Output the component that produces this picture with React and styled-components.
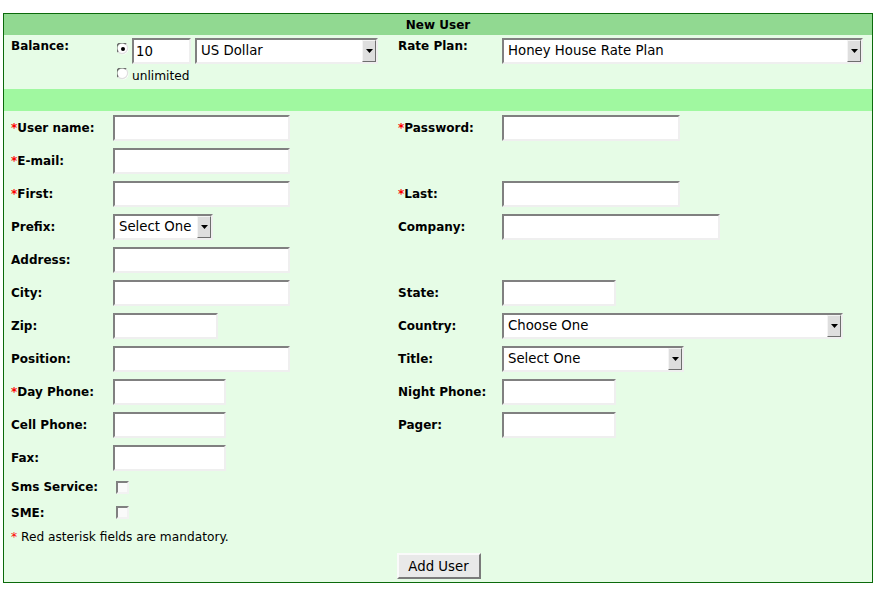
import React from 'react';
import styled, { createGlobalStyle } from 'styled-components';

const GlobalStyle = createGlobalStyle`
  body {
    margin: 0;
    background: #fff;
    font-family: "DejaVu Sans", "Liberation Sans", sans-serif;
    color: #000;
  }
`;

const Page = styled.div`
  padding: 13px 0 0 3px;
`;

const Panel = styled.div`
  width: 870px;
  box-sizing: border-box;
  border: 1px solid #0b6a0b;
  background: #e6fce6;
`;

const Header = styled.div`
  height: 21px;
  line-height: 22px;
  background: #91d991;
  text-align: center;
  font-size: 12px;
  font-weight: bold;
`;

const Band = styled.div`
  height: 22px;
  background: #a0f8a0;
`;

const Row = styled.div`
  display: grid;
  grid-template-columns: 102px 285px 104px 1fr;
  align-items: ${(p) => (p.$top ? 'start' : 'center')};
  height: ${(p) => p.$h || 33}px;
  padding: ${(p) => (p.$top ? '3px' : '0')} 8px 0 7px;
  box-sizing: border-box;
`;

const Label = styled.div`
  font-size: 12px;
  font-weight: bold;
  line-height: 14px;
  white-space: nowrap;
  padding-top: ${(p) => (p.$pad ? '1px' : '0')};
`;

const Star = styled.span`
  color: #ff0000;
`;

const TextInput = styled.input`
  display: block;
  width: ${(p) => p.$w}px;
  height: 26px;
  box-sizing: border-box;
  border: 2px solid;
  border-color: #808080 #efefef #efefef #808080;
  background: #fff;
  padding: 0 2px;
  font-family: "DejaVu Sans", sans-serif;
  font-size: 13.3px;
  color: #000;
  outline: none;
`;

const SelectBox = styled.div`
  display: flex;
  width: ${(p) => p.$w}px;
  height: 26px;
  box-sizing: border-box;
  border: 2px solid;
  border-color: #808080 #efefef #efefef #808080;
  background: #fff;
  font-size: 13.3px;
`;

const SelectText = styled.span`
  flex: 1;
  padding-left: 4px;
  line-height: 22px;
  white-space: nowrap;
  overflow: hidden;
`;

const SelectArrow = styled.span`
  width: 14px;
  box-sizing: border-box;
  border: 1px solid;
  border-color: #f4f4f4 #6e6e6e #6e6e6e #f4f4f4;
  background: #dedede;
  display: flex;
  align-items: center;
  justify-content: center;
`;

const BalanceCell = styled.div`
  display: flex;
  flex-direction: column;
`;

const BalanceLine = styled.div`
  display: flex;
  align-items: ${(p) => (p.$low ? 'flex-start' : 'center')};
  margin-top: ${(p) => (p.$low ? '2px' : '0')};
`;

const RadioWrap = styled.span`
  display: flex;
  width: 12px;
  height: 12px;
  margin: 0 3px 0 4px;
  align-self: flex-start;
  margin-top: ${(p) => (p.$up ? '5px' : '2px')};
`;

const SmallText = styled.span`
  font-size: 12.2px;
  line-height: 20px;
`;

const Gap = styled.span`
  width: ${(p) => p.$w}px;
`;

const CheckBox = styled.span`
  display: block;
  width: 13px;
  height: 13px;
  margin-left: 3px;
  box-sizing: border-box;
  border: 2px solid;
  border-color: #808080 #f2f2f2 #f2f2f2 #808080;
  background: #fafafa;
`;

const Note = styled.div`
  font-size: 12.2px;
  padding-left: 7px;
  height: 24px;
  line-height: 25px;
`;

const ButtonRow = styled.div`
  display: flex;
  justify-content: center;
  padding: 4px 0 3px 1px;
`;

const Button = styled.button`
  width: 84px;
  height: 26px;
  box-sizing: border-box;
  border: 2px solid;
  border-color: #fafafa #7a7a7a #7a7a7a #fafafa;
  background: #e9e9e9;
  font-family: "DejaVu Sans", sans-serif;
  font-size: 13.3px;
  color: #000;
  padding: 0;
`;

const Arrow = () => (
  <svg width="7" height="4" viewBox="0 0 7 4">
    <path d="M0 0h7L3.5 4z" fill="#000" />
  </svg>
);

const Select = ({ w, children }) => (
  <SelectBox $w={w}>
    <SelectText>{children}</SelectText>
    <SelectArrow>
      <Arrow />
    </SelectArrow>
  </SelectBox>
);

const Radio = ({ checked, up }) => (
  <RadioWrap $up={up}>
    <svg width="12" height="12" viewBox="0 0 12 12">
      <circle cx="6" cy="6" r="5.5" fill="#fff" />
      <path d="M1.2 9 A5 5 0 0 1 9 1.2" stroke="#6e6e6e" strokeWidth="1.6" fill="none" />
      <path d="M9 1.2 A5 5 0 0 1 1.2 9" stroke="#e0e0e0" strokeWidth="1.2" fill="none" />
      {checked && <circle cx="6" cy="6" r="2" fill="#000" />}
    </svg>
  </RadioWrap>
);

const Req = ({ children }) => (
  <Label>
    <Star>*</Star>
    {children}
  </Label>
);

export default function App() {
  return (
    <Page>
      <GlobalStyle />
      <Panel>
        <Header>New User</Header>
        <Row $h={54} $top>
          <Label $pad>Balance:</Label>
          <BalanceCell>
            <BalanceLine>
              <Radio checked up />
              <TextInput $w={59} defaultValue="10" />
              <Gap $w={4} />
              <Select w={183}>US Dollar</Select>
            </BalanceLine>
            <BalanceLine $low>
              <Radio />
              <SmallText>unlimited</SmallText>
            </BalanceLine>
          </BalanceCell>
          <Label $pad>Rate Plan:</Label>
          <Select w={361}>Honey House Rate Plan</Select>
        </Row>
        <Band />
        <Row>
          <Req>User name:</Req>
          <TextInput $w={177} />
          <Req>Password:</Req>
          <TextInput $w={178} />
        </Row>
        <Row>
          <Req>E-mail:</Req>
          <TextInput $w={177} />
        </Row>
        <Row>
          <Req>First:</Req>
          <TextInput $w={177} />
          <Req>Last:</Req>
          <TextInput $w={178} />
        </Row>
        <Row>
          <Label>Prefix:</Label>
          <Select w={100}>Select One</Select>
          <Label>Company:</Label>
          <TextInput $w={218} />
        </Row>
        <Row>
          <Label>Address:</Label>
          <TextInput $w={177} />
        </Row>
        <Row>
          <Label>City:</Label>
          <TextInput $w={177} />
          <Label>State:</Label>
          <TextInput $w={114} />
        </Row>
        <Row>
          <Label>Zip:</Label>
          <TextInput $w={105} />
          <Label>Country:</Label>
          <Select w={341}>Choose One</Select>
        </Row>
        <Row>
          <Label>Position:</Label>
          <TextInput $w={177} />
          <Label>Title:</Label>
          <Select w={182}>Select One</Select>
        </Row>
        <Row>
          <Req>Day Phone:</Req>
          <TextInput $w={113} />
          <Label>Night Phone:</Label>
          <TextInput $w={114} />
        </Row>
        <Row>
          <Label>Cell Phone:</Label>
          <TextInput $w={113} />
          <Label>Pager:</Label>
          <TextInput $w={114} />
        </Row>
        <Row>
          <Label>Fax:</Label>
          <TextInput $w={113} />
        </Row>
        <Row $h={26}>
          <Label>Sms Service:</Label>
          <CheckBox />
        </Row>
        <Row $h={25}>
          <Label>SME:</Label>
          <CheckBox />
        </Row>
        <Note>
          <Star>*</Star> Red asterisk fields are mandatory.
        </Note>
        <ButtonRow>
          <Button>Add User</Button>
        </ButtonRow>
      </Panel>
    </Page>
  );
}
